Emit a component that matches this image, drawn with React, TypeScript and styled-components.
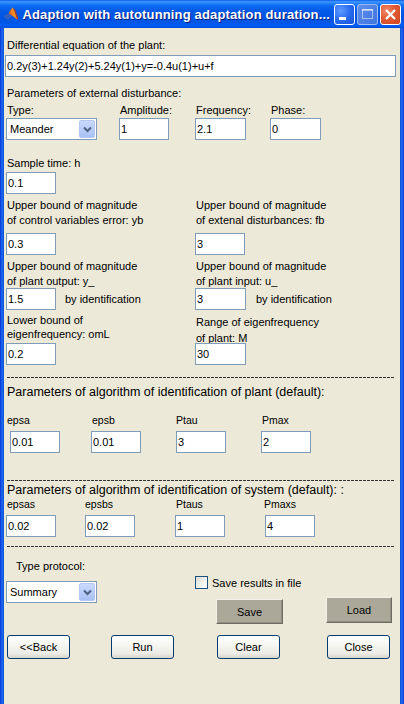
import styled, { createGlobalStyle } from "styled-components";

const GlobalStyle = createGlobalStyle`
  html, body { margin: 0; padding: 0; }
  body { background: #ece9d8; font-family: "Liberation Sans", Arial, sans-serif; }
  * { box-sizing: border-box; }
`;

const FONT = `"Liberation Sans", Arial, sans-serif`;

const Window = styled.div`
  width: 404px;
  height: 704px;
  display: flex;
  flex-direction: column;
  overflow: hidden;
  background: linear-gradient(
    to right,
    #0831d9 0,
    #1c6cf0 2px,
    #0a4fd6 4px,
    #0a4fd6 400px,
    #1c6cf0 402px,
    #0831d9 404px
  );
`;

const TitleBar = styled.div`
  height: 28px;
  flex: none;
  display: flex;
  align-items: center;
  gap: 4px;
  padding: 0 3px;
  background: linear-gradient(
    to bottom,
    #0a5ae8 0%,
    #3d95ff 6%,
    #2a86fb 11%,
    #0c6cf3 20%,
    #0259e6 40%,
    #0055e3 60%,
    #0056e6 82%,
    #005ef5 92%,
    #0049cf 100%
  );
`;

const TitleText = styled.div`
  flex: 1;
  color: #fff;
  font: bold 13px ${FONT};
  letter-spacing: 0.15px;
  white-space: nowrap;
  text-shadow: 1px 1px 0 #0a1c7a;
  padding-top: 1px;
`;

const CaptionGroup = styled.div`
  display: flex;
  gap: 2px;
  margin-top: 1px;
`;

const CaptionButton = styled.div<{ $kind: "min" | "max" | "close" }>`
  width: 21px;
  height: 21px;
  border-radius: 3px;
  display: flex;
  align-items: center;
  justify-content: center;
  border: 1px solid ${(p) => (p.$kind === "max" ? "rgba(255,255,255,0.45)" : "#fff")};
  background: ${(p) =>
    p.$kind === "close"
      ? "radial-gradient(circle at 30% 30%, #f08a6c 0%, #e25a33 45%, #c8431f 100%)"
      : p.$kind === "max"
      ? "linear-gradient(135deg, #5f8fe8 0%, #3f74e0 100%)"
      : "radial-gradient(circle at 30% 30%, #5d9bff 0%, #2a6cf0 50%, #1550d8 100%)"};
`;

const TitleIcon = () => (
  <svg width="16" height="16" viewBox="0 0 16 16">
    <polygon points="0,10 6,7 10,10 4,14" fill="#2f5fc0" />
    <polygon points="0,10 4,14 5,15 1,11" fill="#1c3a8a" />
    <polygon points="6,7 10,1 12,5 15,14 10,10" fill="#f28a1e" />
    <polygon points="10,1 12,5 15,14 16,13 13,4" fill="#b8301a" />
    <polygon points="6,7 8,4 10,10" fill="#e8641a" />
  </svg>
);

const Body = styled.div`
  flex: 1;
  margin: 0 4px;
  background: #ece9d8;
  display: flex;
  flex-direction: column;
  color: #000;
  font: 11px ${FONT};
`;

const Caption = styled.div<{ $mt?: number; $ml?: number; $lh?: number; $pt?: number }>`
  font-size: 11px;
  line-height: ${(p) => p.$lh ?? 14}px;
  margin-top: ${(p) => p.$mt ?? 0}px;
  margin-left: ${(p) => p.$ml ?? 0}px;
  padding-top: ${(p) => p.$pt ?? 0}px;
  white-space: nowrap;
`;

const Heading = styled.div<{ $mt: number }>`
  font-size: 12.5px;
  line-height: 15px;
  margin: ${(p) => p.$mt}px 0 0 3px;
  white-space: nowrap;
`;

const SmallLabel = styled.div<{ $ml?: number; $lh?: number }>`
  font-size: 10.5px;
  line-height: ${(p) => p.$lh ?? 14}px;
  margin-left: ${(p) => p.$ml ?? 0}px;
  white-space: nowrap;
`;

const TextBox = styled.input<{ $w: number }>`
  display: block;
  width: ${(p) => p.$w}px;
  height: 22px;
  margin: 0;
  padding: 0 1px;
  border: 1px solid #7f9db9;
  background: #fff;
  color: #000;
  font: 11px ${FONT};
  outline: none;
`;

const EquationBox = styled(TextBox)`
  margin: 3px 0 0 1px;
`;

const SampleBox = styled(TextBox)`
  margin: 2px 0 0 2px;
`;

const Select = styled.div<{ $w: number }>`
  width: ${(p) => p.$w}px;
  height: 22px;
  border: 1px solid #7f9db9;
  background: #fff;
  display: flex;
  align-items: center;
  justify-content: space-between;
  padding: 1px;
  font-size: 11px;
`;

const SelectText = styled.span`
  padding-left: 2px;
`;

const SelectArrow = styled.div`
  width: 16px;
  height: 18px;
  border-radius: 2px;
  border: 1px solid #b4c7f2;
  background: linear-gradient(to bottom, #c9d9fd 0%, #b6cbf8 60%, #a9c0f3 100%);
  display: flex;
  align-items: center;
  justify-content: center;
`;

const Dropdown = ({ value, width }: { value: string; width: number }) => (
  <Select $w={width}>
    <SelectText>{value}</SelectText>
    <SelectArrow>
      <svg width="9" height="7" viewBox="0 0 9 7">
        <path d="M1 1.5 L4.5 5 L8 1.5" fill="none" stroke="#4d6185" strokeWidth="2" />
      </svg>
    </SelectArrow>
  </Select>
);

const DisturbanceGrid = styled.div`
  display: grid;
  grid-template-columns: 113px 76px 75px auto;
  row-gap: 1px;
  margin-top: 3px;
  padding-left: 2px;
`;

const PairGrid = styled.div<{ $mt: number; $gap: number; $labelRow?: number }>`
  display: grid;
  grid-template-columns: 189px auto;
  grid-template-rows: ${(p) => (p.$labelRow ? `${p.$labelRow}px` : "auto")} auto;
  row-gap: ${(p) => p.$gap}px;
  margin-top: ${(p) => p.$mt}px;
  padding-left: 2px;
`;

const InlineField = styled.div<{ $gap: number }>`
  display: flex;
  align-items: center;
  gap: ${(p) => p.$gap}px;
`;

const Dashes = styled.div<{ $mt: number }>`
  height: 1px;
  margin: ${(p) => p.$mt}px 6px 0 3px;
  background: repeating-linear-gradient(to right, #333 0 3px, transparent 3px 4px);
`;

const ParamGrid = styled.div<{ $cols: string; $pl: number; $mt: number; $gap: number }>`
  display: grid;
  grid-template-columns: ${(p) => p.$cols};
  row-gap: ${(p) => p.$gap}px;
  margin-top: ${(p) => p.$mt}px;
  padding-left: ${(p) => p.$pl}px;
`;

const BottomGrid = styled.div`
  display: grid;
  grid-template-columns: 191px auto;
`;

const Column = styled.div`
  display: flex;
  flex-direction: column;
  align-items: flex-start;
`;

const ProtocolSelect = styled.div`
  margin: 8px 0 0 2px;
`;

const CheckRow = styled.div`
  height: 13px;
  margin-top: 29px;
  display: flex;
  align-items: center;
  gap: 4px;
`;

const CheckBox = styled.div`
  width: 13px;
  height: 13px;
  border: 1px solid #1c5180;
  background: linear-gradient(135deg, #dcdcd7 0%, #f2f2ee 60%, #ffffff 100%);
`;

const FileButtons = styled.div`
  display: flex;
  align-items: flex-start;
  margin-top: 8px;
`;

const FlatButton = styled.div<{ $w: number; $h: number; $ml: number; $mt?: number }>`
  width: ${(p) => p.$w}px;
  height: ${(p) => p.$h}px;
  margin-left: ${(p) => p.$ml}px;
  margin-top: ${(p) => p.$mt ?? 0}px;
  display: flex;
  align-items: center;
  justify-content: center;
  background: #aca899;
  border-top: 1px solid #f4f2e8;
  border-left: 1px solid #f4f2e8;
  border-right: 1px solid #6e6c62;
  border-bottom: 1px solid #6e6c62;
  box-shadow: inset -1px -1px 0 #918e82;
  font-size: 11px;
`;

const ActionRow = styled.div`
  display: grid;
  grid-template-columns: 104px 106px 110px 63px;
  margin-top: 11px;
  padding-left: 3px;
`;

const XPButton = styled.div`
  width: 63px;
  height: 24px;
  border: 1px solid #003c74;
  border-radius: 3px;
  display: flex;
  align-items: center;
  justify-content: center;
  font-size: 11px;
  background: linear-gradient(to bottom, #ffffff 0%, #f6f6f2 40%, #ecebe5 80%, #d8d4c8 100%);
`;

export default function App() {
  return (
    <>
      <GlobalStyle />
      <Window>
        <TitleBar>
          <TitleIcon />
          <TitleText>Adaption with autotunning adaptation duration...</TitleText>
          <CaptionGroup>
            <CaptionButton $kind="min">
              <svg width="19" height="19" viewBox="0 0 19 19">
                <rect x="4" y="12" width="7" height="3" fill="#fff" />
              </svg>
            </CaptionButton>
            <CaptionButton $kind="max">
              <svg width="19" height="19" viewBox="0 0 19 19">
                <rect x="4.5" y="4.5" width="10" height="9" fill="none" stroke="rgba(255,255,255,0.5)" />
                <rect x="4" y="4" width="11" height="2" fill="rgba(255,255,255,0.5)" />
              </svg>
            </CaptionButton>
            <CaptionButton $kind="close">
              <svg width="19" height="19" viewBox="0 0 19 19">
                <path d="M5 5 L14 14 M14 5 L5 14" stroke="#fff" strokeWidth="2.2" />
              </svg>
            </CaptionButton>
          </CaptionGroup>
        </TitleBar>

        <Body>
          <Caption $mt={10} $ml={3}>Differential equation of the plant:</Caption>
          <EquationBox $w={391} defaultValue="0.2y(3)+1.24y(2)+5.24y(1)+y=-0.4u(1)+u+f" readOnly />

          <Caption $mt={9} $ml={3}>Parameters of external disturbance:</Caption>
          <DisturbanceGrid>
            <Caption $ml={1}>Type:</Caption>
            <Caption $ml={1}>Amplitude:</Caption>
            <Caption $ml={1}>Frequency:</Caption>
            <Caption $ml={1}>Phase:</Caption>
            <Dropdown value="Meander" width={91} />
            <TextBox $w={50} defaultValue="1" readOnly />
            <TextBox $w={51} defaultValue="2.1" readOnly />
            <TextBox $w={51} defaultValue="0" readOnly />
          </DisturbanceGrid>

          <Caption $mt={16} $ml={3}>Sample time: h</Caption>
          <SampleBox $w={50} defaultValue="0.1" readOnly />

          <PairGrid $mt={4} $gap={5}>
            <Caption $ml={1} $lh={15}>
              Upper bound of magnitude
              <br />
              of control variables error: yb
            </Caption>
            <Caption $ml={1} $lh={15}>
              Upper bound of magnitude
              <br />
              of extenal disturbances: fb
            </Caption>
            <TextBox $w={50} defaultValue="0.3" readOnly />
            <TextBox $w={50} defaultValue="3" readOnly />
          </PairGrid>

          <PairGrid $mt={4} $gap={0}>
            <Caption $ml={1} $lh={14.5}>
              Upper bound of magnitude
              <br />
              of plant output: y_
            </Caption>
            <Caption $ml={1} $lh={14.5}>
              Upper bound of magnitude
              <br />
              of plant input: u_
            </Caption>
            <InlineField $gap={9}>
              <TextBox $w={50} defaultValue="1.5" readOnly />
              <span>by identification</span>
            </InlineField>
            <InlineField $gap={10}>
              <TextBox $w={51} defaultValue="3" readOnly />
              <span>by identification</span>
            </InlineField>
          </PairGrid>

          <PairGrid $mt={3} $gap={0} $labelRow={30}>
            <Caption $ml={1} $lh={14}>
              Lower bound of
              <br />
              eigenfrequency: omL
            </Caption>
            <Caption $ml={1} $lh={16} $pt={1}>
              Range of eigenfrequency
              <br />
              of plant: M
            </Caption>
            <TextBox $w={50} defaultValue="0.2" readOnly />
            <TextBox $w={51} defaultValue="30" readOnly />
          </PairGrid>

          <Dashes $mt={12} />
          <Heading $mt={7}>Parameters of algorithm of identification of plant (default):</Heading>
          <ParamGrid $cols="81px 85px 85px auto" $pl={6} $mt={13} $gap={4}>
            <SmallLabel $ml={-3}>epsa</SmallLabel>
            <SmallLabel $ml={1}>epsb</SmallLabel>
            <SmallLabel>Ptau</SmallLabel>
            <SmallLabel $ml={1}>Pmax</SmallLabel>
            <TextBox $w={50} defaultValue="0.01" readOnly />
            <TextBox $w={50} defaultValue="0.01" readOnly />
            <TextBox $w={50} defaultValue="3" readOnly />
            <TextBox $w={50} defaultValue="2" readOnly />
          </ParamGrid>

          <Dashes $mt={27} />
          <Heading $mt={2}>Parameters of algorithm of identification of system (default): :</Heading>
          <ParamGrid $cols="79px 90px 90px auto" $pl={2} $mt={0} $gap={5}>
            <SmallLabel $ml={1} $lh={12}>epsas</SmallLabel>
            <SmallLabel $lh={12}>epsbs</SmallLabel>
            <SmallLabel $ml={1} $lh={12}>Ptaus</SmallLabel>
            <SmallLabel $ml={-1} $lh={12}>Pmaxs</SmallLabel>
            <TextBox $w={50} defaultValue="0.02" readOnly />
            <TextBox $w={50} defaultValue="0.02" readOnly />
            <TextBox $w={50} defaultValue="1" readOnly />
            <TextBox $w={50} defaultValue="4" readOnly />
          </ParamGrid>

          <Dashes $mt={9} />
          <BottomGrid>
            <Column>
              <Caption $mt={12} $ml={12}>Type protocol:</Caption>
              <ProtocolSelect>
                <Dropdown value="Summary" width={91} />
              </ProtocolSelect>
            </Column>
            <Column>
              <CheckRow>
                <CheckBox />
                <span>Save results in file</span>
              </CheckRow>
              <FileButtons>
                <FlatButton $w={67} $h={25} $ml={21} $mt={2}>Save</FlatButton>
                <FlatButton $w={66} $h={26} $ml={43}>Load</FlatButton>
              </FileButtons>
            </Column>
          </BottomGrid>

          <ActionRow>
            <XPButton>&lt;&lt;Back</XPButton>
            <XPButton>Run</XPButton>
            <XPButton>Clear</XPButton>
            <XPButton>Close</XPButton>
          </ActionRow>
        </Body>
      </Window>
    </>
  );
}
